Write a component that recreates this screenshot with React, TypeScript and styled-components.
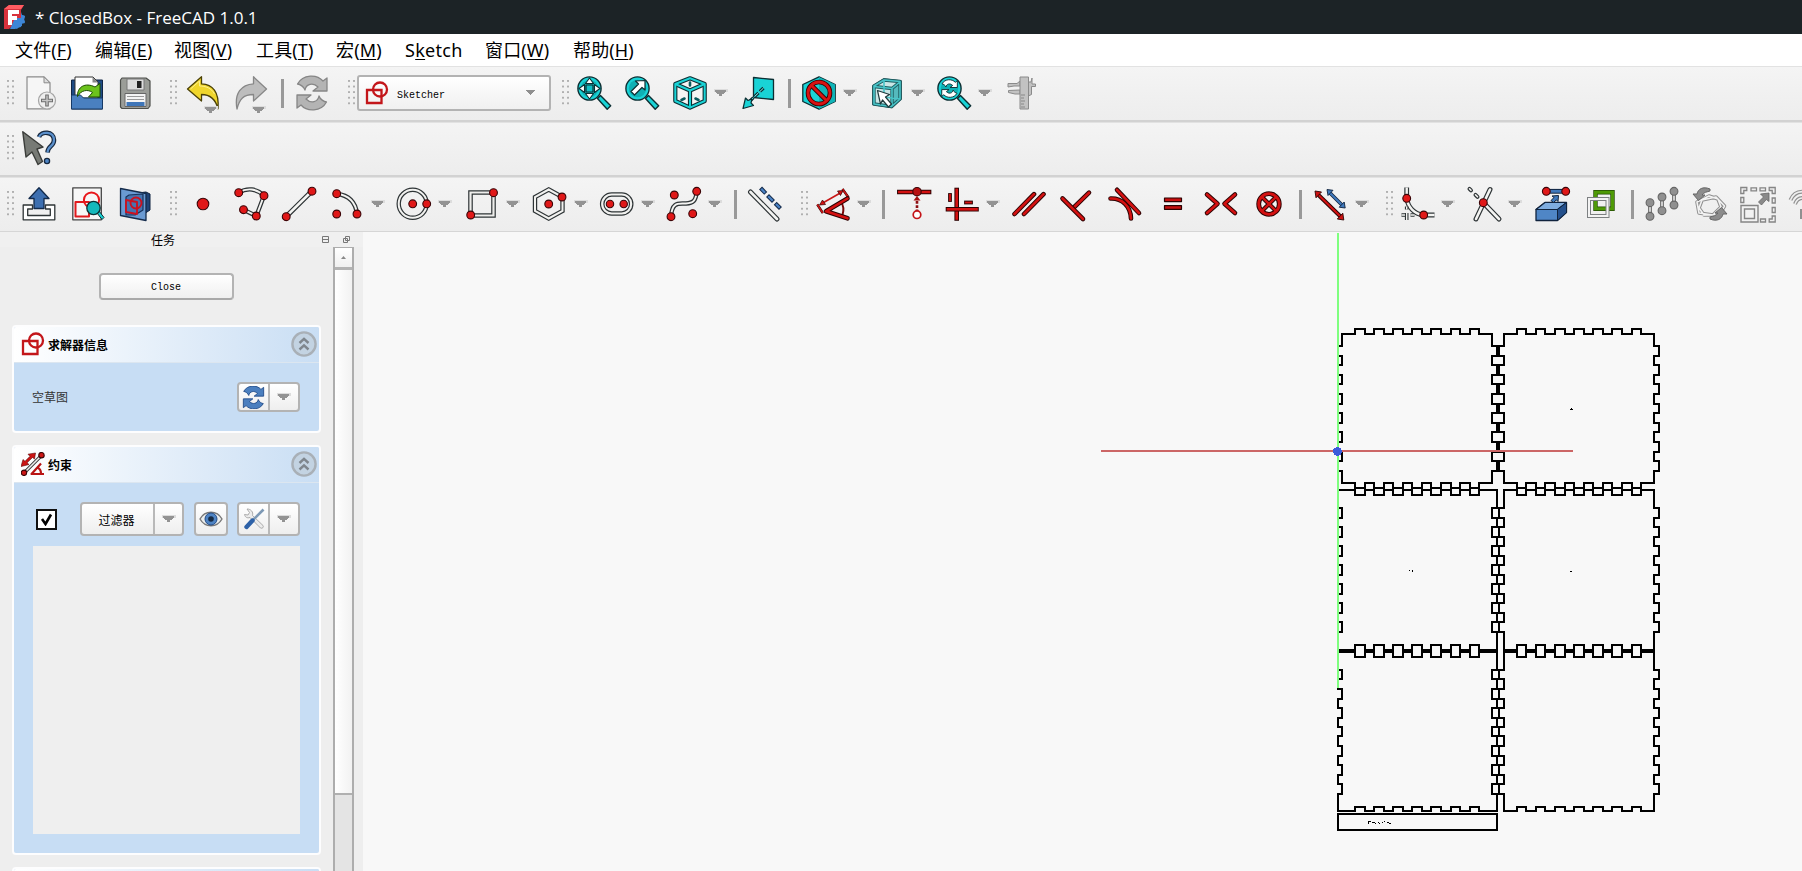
import React from 'react';
import styled, { createGlobalStyle } from 'styled-components';

const Global = createGlobalStyle`
  * { box-sizing: border-box; }
  html, body { margin: 0; padding: 0; overflow: hidden; background: #efefef; }
`;

const UI_FONT = '"Noto Sans", "Noto Sans CJK SC", sans-serif';
const SMALL_FONT = '"Noto Sans CJK SC", sans-serif';

const Window = styled.div`
  width: 1802px;
  height: 871px;
  display: flex;
  flex-direction: column;
  overflow: hidden;
  color: #000;
  font-family: ${UI_FONT};
`;

const TitleBar = styled.header`
  height: 34px;
  flex: none;
  display: flex;
  align-items: center;
  padding-left: 3px;
  gap: 10px;
  background: #1c2326;
  color: #fff;
`;

const TitleText = styled.span`
  font: 17px/34px "Open Sans", sans-serif;
  padding-top: 1px;
  white-space: pre;
`;

const MenuBar = styled.nav`
  height: 32px;
  flex: none;
  display: flex;
  padding-left: 15px;
  gap: 22px;
  background: #fff;
`;

const MenuItem = styled.span<{ $w: number; $ls?: number }>`
  width: ${(p) => p.$w}px;
  font: 18px/33px ${UI_FONT};
  letter-spacing: ${(p) => p.$ls ?? 0.15}px;
  white-space: nowrap;
  u { text-underline-offset: 2px; text-decoration-thickness: 1px; }
`;

const ToolBar = styled.div<{ $h: number; $pad: number; $last?: boolean }>`
  height: ${(p) => p.$h}px;
  flex: none;
  display: flex;
  align-items: center;
  overflow: hidden;
  background: linear-gradient(#f4f4f4, #ededed);
  border-top: 1px solid #e2e2e2;
  border-bottom: ${(p) => (p.$last ? '1px solid #d6d6d6' : '2px solid #d2d2d2')};
  padding-bottom: ${(p) => p.$pad}px;
`;

const Handle = styled.span<{ $ml: number }>`
  flex: none;
  width: 8px;
  height: 27px;
  margin-left: ${(p) => p.$ml}px;
  margin-right: -2px;
  background-image: radial-gradient(circle at 1px 1px, #b0b0b0 0.9px, transparent 1.2px);
  background-size: 5px 5.6px;
`;

const ToolButton = styled.span<{ $ml: number; $w?: number }>`
  position: relative;
  flex: none;
  display: flex;
  width: ${(p) => p.$w ?? 34}px;
  height: 34px;
  margin-left: ${(p) => p.$ml}px;
  svg { display: block; overflow: visible; }
`;

const Separator = styled.span<{ $ml: number }>`
  flex: none;
  width: 3px;
  height: 29px;
  margin-left: ${(p) => p.$ml}px;
  background: #999;
`;

const DropSlot = styled.span`
  flex: none;
  width: 14px;
  height: 8px;
  margin-left: 7px;
  display: flex;
`;

const CornerArrow = styled.span`
  position: absolute;
  left: 18px;
  top: 30px;
`;

const Combo = styled.div`
  flex: none;
  width: 194px;
  height: 36px;
  margin-left: 3px;
  padding: 0 13px 0 6px;
  display: flex;
  align-items: center;
  border: 2px solid #b3b3b3;
  border-radius: 3px;
  background: linear-gradient(#fff, #f0f0f0);
`;

const ComboText = styled.span`
  flex: 1;
  margin-left: 8px;
  padding-top: 5px;
  font: 10px/14px "Liberation Mono", monospace;
`;

const Main = styled.main`
  flex: 1;
  display: flex;
  min-height: 0;
`;

const Dock = styled.aside`
  width: 363px;
  flex: none;
  display: flex;
  flex-direction: column;
  background: #eee;
`;

const DockTitle = styled.div`
  height: 15px;
  flex: none;
  display: flex;
  align-items: center;
  justify-content: flex-end;
  padding: 0 13px 0 0;
  background: #f0f0f0;
`;

const DockName = styled.span`
  flex: 1;
  padding-left: 151px;
  font: 12px/15px ${SMALL_FONT};
`;

const DockIcons = styled.span`
  display: flex;
  gap: 14px;
`;

const DockBody = styled.div`
  flex: 1;
  min-height: 0;
  display: flex;
`;

const TaskList = styled.div`
  width: 333px;
  padding: 26px 12px 0;
  display: flex;
  flex-direction: column;
  overflow: hidden;
`;

const CloseButton = styled.button`
  flex: none;
  width: 135px;
  height: 27px;
  margin: 0 0 25px 87px;
  padding: 2px 1px 0 0;
  border: 2px solid #b3b3b3;
  border-bottom-color: #a9a9a9;
  border-radius: 4px;
  background: linear-gradient(#fff, #f0f0f0);
  font: 10px/20px "Liberation Mono", monospace;
  color: #000;
`;

const TaskBox = styled.section<{ $h: number }>`
  flex: none;
  height: ${(p) => p.$h}px;
  margin-bottom: 12px;
  border: 2px solid #fdfdfe;
  border-radius: 4px;
  background: #c7ddf4;
  overflow: hidden;
`;

const TaskHead = styled.div`
  height: 36px;
  display: flex;
  align-items: center;
  padding: 0 2px 2px 7px;
  gap: 3px;
  border-bottom: 1px solid #dce6f0;
  background: linear-gradient(90deg, #fff, #c9def4);
  font: 700 12px/34px ${SMALL_FONT};
  span { padding-top: 2px; }
  svg:last-child { margin-left: auto; }
`;

const TaskRow = styled.div<{ $mt: number }>`
  display: flex;
  align-items: center;
  height: 34px;
  margin-top: ${(p) => p.$mt}px;
  padding: 0 19px;
`;

const StatusText = styled.span`
  flex: 1;
  margin-left: -1px;
  font: 12px/16px ${SMALL_FONT};
  color: #333;
`;

const ButtonGroup = styled.div<{ $h: number; $ml?: number }>`
  display: flex;
  height: ${(p) => p.$h}px;
  margin-left: ${(p) => p.$ml ?? 0}px;
  border: 2px solid #b3b3b3;
  border-radius: 4px;
  background: linear-gradient(#fff, #eee);
`;

const Segment = styled.span<{ $w: number; $split?: boolean }>`
  width: ${(p) => p.$w}px;
  display: flex;
  align-items: center;
  justify-content: center;
  border-left: ${(p) => (p.$split ? '2px solid #b9b9b9' : 'none')};
  font: 12px/26px ${SMALL_FONT};
`;

const SegmentLabel = styled.span`
  padding: 2px 2px 0 0;
`;

const CheckBox = styled.span`
  width: 21px;
  height: 21px;
  margin-left: 3px;
  flex: none;
  display: flex;
  align-items: center;
  justify-content: center;
  border: 2px solid #111;
  background: #fff;
`;

const ConstraintList = styled.div`
  height: 288px;
  margin: 10px 19px 0;
  background: #efefef;
`;

const ScrollBar = styled.div`
  width: 21px;
  display: flex;
  flex-direction: column;
  border-left: 2px solid #adadad;
  border-right: 2px solid #adadad;
  border-top: 1px solid #adadad;
  background: #e4e4e4;
`;

const ScrollUp = styled.div`
  height: 22px;
  flex: none;
  display: flex;
  align-items: center;
  justify-content: center;
  border-bottom: 3px solid #b3b3b3;
  background: linear-gradient(#fff, #f0f0f0);
`;

const ScrollThumb = styled.div`
  height: 525px;
  flex: none;
  background: linear-gradient(90deg, #fff, #f2f2f2);
  border-bottom: 2px solid #b0b0b0;
`;

const Viewport = styled.div`
  flex: 1;
  display: flex;
  padding-top: 1px;
  background: #f8f8f8;
`;

/* ---------- icon primitives ---------- */

const OUT = '#0c2f33';
const TEAL = '#19d3d6';

const Icon = ({ children, w = 34, h = 34, vb }: { children: React.ReactNode; w?: number; h?: number; vb?: string }) => (
  <svg width={w} height={h} viewBox={vb ?? `0 0 ${w} ${h}`} fill="none" strokeLinejoin="round">{children}</svg>
);
const Dot = ({ x, y, r = 3.9, fill = '#e01818', stroke = '#3a0508' }: { x: number; y: number; r?: number; fill?: string; stroke?: string }) => (
  <circle cx={x} cy={y} r={r} fill={fill} stroke={stroke} strokeWidth={1.1} />
);
const Pipe = ({ d, inner = '#f4f4f2', outer = '#2e3436', w = 4.4, iw = 1.9, cap = 'round' }: { d: string; inner?: string; outer?: string; w?: number; iw?: number; cap?: 'round' | 'butt' | 'square' }) => (
  <g strokeLinecap={cap}>
    <path d={d} stroke={outer} strokeWidth={w} />
    <path d={d} stroke={inner} strokeWidth={iw} />
  </g>
);
const Red = ({ d, w = 4.6, cap = 'round' as 'round' | 'square' }: { d: string; w?: number; cap?: 'round' | 'square' }) => (
  <Pipe d={d} inner="#d41111" outer="#2c0303" w={w} iw={w - 2} cap={cap} />
);

const Triangle = () => (
  <svg width="14" height="8" viewBox="0 0 14 8" shapeRendering="crispEdges">
    <rect width="14" height="3" fill="#dcdcdc" />
    <path d="M1 1h11v2h-1v1h-1v1h-2v2h-3v-2h-2v-1h-1v-1h-1z" fill="#939393" />
  </svg>
);
const SmallTriangle = () => (
  <svg width="10" height="6" viewBox="0 0 10 6" shapeRendering="crispEdges">
    <path d="M0 0h9v1h-1v1h-1v1h-1v1h-1v1h-1v-1h-1v-1h-1v-1h-1v-1h-1z" fill="#8f8f8f" />
  </svg>
);
const Drop = () => <DropSlot><Triangle /></DropSlot>;

const Lens = () => (
  <>
    <path d="M20.500 22.500l3-3 10.200 10.200-3.500 3.500z" fill={TEAL} stroke={OUT} strokeWidth="1.4" />
    <circle cx="12.500" cy="12.500" r="11.600" fill={TEAL} stroke={OUT} strokeWidth="1.400" />
    <circle cx="12.500" cy="12.500" r="8.700" fill="#0fb0b4" />
  </>
);

const Logo = () => (
  <Icon w={22} h={26}>
    <path d="M10 9l3-2 2 2 3-1 1 3 3 1-1 3 1 3-3 1v3l-3 1-2 2-4-2z" fill="#3d86d6" />
    <path d="M1 5L6 1h15l-3 5v8L6 25H1z" fill="#d8323c" />
    <path d="M1 5L6 1h15l-3 4H6z" fill="#ff5c62" />
    <path d="M12 14h6l1-3 3 1-1 4 1 3-4 1v3l-4 1-2 1H7z" fill="#3d86d6" />
    <path d="M5 6h11v4H9v2h5v4H9v5H5z" fill="#fff" />
  </Icon>
);
const NewDoc = () => (
  <Icon>
    <path d="M5 .8h17l6 6v26H5z" fill="#f6f6f6" stroke="#8b8b8b" strokeWidth="1.200" />
    <path d="M22 .8v6h6z" fill="#ddd" stroke="#8b8b8b" />
    <circle cx="25" cy="24.500" r="8.500" fill="#eee" stroke="#a5a5a5" strokeWidth="1.200" />
    <path d="M25 18.500v12M19 24.500h12" stroke="#6f6f6f" strokeWidth="3.600" />
    <path d="M25 19.500v10M20 24.500h10" stroke="#c8c8c8" strokeWidth="1.400" />
  </Icon>
);
const OpenDoc = () => (
  <Icon>
    <path d="M1.500 4h31v29h-31z" fill="#1e4b85" stroke="#102544" />
    <path d="M5 1h18l5 5v16H5z" fill="#fff" stroke="#333" />
    <path d="M22.500 1v5.500H28z" fill="#888" />
    <path d="M1.500 19h9l3 3h19v11h-31z" fill="#4a80c0" stroke="#173a66" />
    <path d="M7.500 20.500C7 11 15 6 25 11l5-3.500V21H18.500l4-4.500C18 13 11 14 7.500 20.500z" fill="#6cc31c" stroke="#1d4c04" />
  </Icon>
);
const Save = () => (
  <Icon>
    <path d="M4 2h24l4 3v25l-2 2.500H4L2.500 31V4z" fill="#9b9d98" stroke="#4d4f4b" strokeWidth="1.200" />
    <rect x="9" y="3" width="17" height="11" fill="#ddd" stroke="#777" />
    <rect x="19" y="5" width="4.500" height="7" fill="#222" />
    <path d="M7 17.500h21v13H7z" fill="#f4f4f4" stroke="#666" />
    <path d="M9 20.500h17M9 23.500h17" stroke="#999" />
    <path d="M8.500 26h18v4h-18z" fill="#3f76b8" />
  </Icon>
);
const Undo = () => (
  <Icon>
    <path d="M1.500 13L15.500 .8v7c11 .5 18 8 16.500 25C29.500 23 24.500 18.500 15.500 18.500V25z" fill="#f0d62c" stroke="#4b4106" strokeWidth="1.300" />
    <path d="M4.500 13l9-8v5c6 0 12 2 15 8" stroke="#fdf08a" />
  </Icon>
);
const Redo = () => (
  <Icon>
    <path d="M32.500 13L19.500 .8v7C7.500 8.500 0 17 3 33 5.500 23 9.500 18.500 19.500 18.500V25z" fill="#bdbdbd" stroke="#878787" strokeWidth="1.300" />
  </Icon>
);
const SYNC_PATH = 'M2.500 8C8-2 22-2 28 5l4-3v13H18l5-4C18 6 11 8 10 14 9 11 5 8 2.500 8zM31.500 26C26 36 12 36 6 29l-4 3V19h14l-5 4c5 5 12 3 13-3 1 3 5 6 7.500 6z';
const Sync = ({ fill, stroke, size = 34 }: { fill: string; stroke: string; size?: number }) => (
  <Icon w={size} h={size} vb="0 0 34 34">
    <path d={SYNC_PATH} fill={fill} stroke={stroke} strokeWidth="1.300" />
  </Icon>
);
const SketchMark = ({ size = 24 }: { size?: number }) => (
  <Icon w={size} h={size} vb="0 0 24 24">
    <g stroke="#c3161a" strokeWidth="2.300" strokeLinejoin="miter">
      <path d="M2 9h14.500v13H2z" />
      <circle cx="15" cy="8.500" r="7" />
    </g>
  </Icon>
);
const HelpCursor = () => (
  <Icon>
    <path d="M.8.800L21 16l-6 2 5.500 12.500-4.500 3L10 21l-6 5z" fill="#777a75" stroke="#3a3c39" strokeWidth="1.400" />
    <Pipe d="M17 6c2-6 15-6 15 3 0 7-6 5-6.500 12.500" inner="#5b90cc" outer="#16273e" w={4.600} iw={2.200} cap="butt" />
    <circle cx="25" cy="30" r="2.600" fill="#4d84c4" stroke="#16273e" strokeWidth="1.300" />
  </Icon>
);
const FitAll = () => (
  <Icon>
    <Lens />
    <path d="M12.500 2l4 5.500h-8zM12.500 23l4-5.500h-8zM2 12.500l5.500-4v8zM23 12.500l-5.500-4v8z" fill="#fff" stroke={OUT} strokeWidth="1.100" />
    <path d="M9 9h7v7H9z" fill="#12c0c4" stroke={OUT} strokeWidth="1.200" />
  </Icon>
);
const FitSelection = () => (
  <Icon>
    <Lens />
    <path d="M20 4.500v9.500l-3-2.500-7.500 7.500-3.500-3.500L13.500 8l-3-3z" fill="#fff" stroke={OUT} strokeWidth="1.200" />
  </Icon>
);
const IsoView = () => (
  <Icon>
    <g stroke={OUT} strokeWidth="4.200" fill="#f4f4f4">
      <path d="M17 2.300L31.700 8v17L17 31.700 2.300 25V8z" />
      <path d="M2.300 8L17 14.500 31.700 8M17 14.500V32" />
    </g>
    <g stroke={TEAL} strokeWidth="2">
      <path d="M17 2.300L31.700 8v17L17 31.700 2.300 25V8z" />
      <path d="M2.300 8L17 14.500 31.700 8M17 14.500V32" />
    </g>
    <path d="M17 6.500v3M8.500 24l3-1.500M22.500 22.500l3 1.500" stroke="#0a5a5e" strokeWidth="2.600" strokeLinecap="round" />
  </Icon>
);
const AlignView = () => (
  <Icon>
    <path d="M12.500 1.500L32.500 3.500v20l-20-2z" fill={TEAL} stroke={OUT} strokeWidth="1.300" />
    <path d="M22.500 12L9 25" stroke={OUT} strokeWidth="3.200" strokeDasharray="5 2" />
    <path d="M22.500 12L9 25" stroke="#8ff" strokeWidth="1" strokeDasharray="5 2" />
    <path d="M2 32.500l2.500-10.500 2.500 2.500 4-1.500-1 4 2.500 2.500z" fill={TEAL} stroke={OUT} strokeWidth="1.200" />
  </Icon>
);
const DrawStyle = () => (
  <Icon>
    <path d="M17 .8L33.200 8.500v17L17 33.200.8 25.500v-17z" fill={TEAL} stroke={OUT} strokeWidth="1.300" />
    <path d="M17 1v32l16-7.500v-17z" fill="#10b4b8" />
    <circle cx="17" cy="17" r="11" stroke="#3a0000" strokeWidth="4.600" />
    <path d="M9 9l16 16" stroke="#3a0000" strokeWidth="4.600" />
    <circle cx="17" cy="17" r="11" stroke="#d81313" strokeWidth="2.800" />
    <path d="M9 9l16 16" stroke="#d81313" strokeWidth="2.800" />
  </Icon>
);
const SelectCube = () => (
  <Icon>
    <path d="M3 10l11-7 17 2v18l-9 8.500-19-3z" fill="#c9e6e6" stroke={OUT} strokeWidth="1.600" />
    <path d="M22 13l9-8v18l-9 8.500z" fill="#55b9bd" />
    <g stroke="#1f5f63" strokeWidth="3.400"><path d="M4 10.500l18 2 8.500-7M22 13v17M4 10l10-6 16 1.500V23l-8.500 7.500L4 28z" /></g>
    <g stroke="#49c5c9" strokeWidth="1.600"><path d="M4 10.500l18 2 8.500-7M22 13v17M4 10l10-6 16 1.500V23l-8.500 7.500L4 28zM14 4v17M14 21l16 2" /></g>
    <path d="M7.500 14.500l12 4-4 2.500 6 7-3 3-6-7-2 4z" fill="#fff" stroke="#203a3c" strokeWidth="1.200" />
  </Icon>
);
const LensSync = () => (
  <Icon>
    <Lens />
    <path d={SYNC_PATH} transform="translate(3.700 3.700) scale(.52)" fill="#fff" stroke={OUT} strokeWidth="1.800" />
  </Icon>
);
const Caliper = () => (
  <Icon>
    <g fill="#c2c2c2" stroke="#8a8a8a">
      <path d="M14 5v5H8l-6 1V7.500h9z" />
      <path d="M14 14v4H9L2.500 16.500v-2z" />
      <path d="M20 6h5l1-4v6h3.500v2.500h-4v8L20 21z" />
      <path d="M14 1h8.500v32H14z" />
    </g>
    <path d="M15 19h4M15 22h3M15 25h4M15 28h3M15 31h4" stroke="#888" />
  </Icon>
);

const LeaveSketch = () => (
  <Icon>
    <path d="M10.500 18H1.200v14.800h31.600V18H23.500v4h4.800v6.500H5.700V22h4.800z" fill="#fff" stroke="#2e3436" strokeWidth="1.300" />
    <path d="M17 .8l10 10.700h-5v10H12v-10H7z" fill="#3d6fb0" stroke="#122a4b" strokeWidth="1.300" />
  </Icon>
);
const ViewSketch = () => (
  <Icon>
    <path d="M2.800.8h28.500v32H2.800z" fill="#f7f7f7" stroke="#444" strokeWidth="1.300" />
    <path d="M5.500 15h13.500v14.500H5.500z" stroke="#e01a1e" strokeWidth="2" />
    <circle cx="21.500" cy="13" r="7.600" stroke="#e8181c" strokeWidth="2" />
    <path d="M27 26l2-2 5 6.500-2 2z" fill={TEAL} stroke={OUT} />
    <circle cx="23.500" cy="21" r="6.700" fill="#14b9bc" stroke={OUT} strokeWidth="1.300" />
  </Icon>
);
const SectionView = () => (
  <Icon>
    <path d="M12 7l16-2 4 2v16l-6 4z" fill="#1f4376" stroke="#0f2340" />
    <path d="M2.500 1.500L28 6.500v27L2.500 28.500z" fill="#6a9ad2" stroke="#152c4c" strokeWidth="1.300" />
    <path d="M11 8l14-1v16l-8 5H8V10z" fill="#4674b0" stroke="#17335c" strokeWidth="1.200" />
    <path d="M8 13l11 2v12l-11-2z" stroke="#cc1220" strokeWidth="1.900" />
    <circle cx="18" cy="16" r="5.500" stroke="#cc1220" strokeWidth="1.900" />
  </Icon>
);
const PointTool = () => <Icon><Dot x={17} y={17} r={5.800} /></Icon>;
const Polyline = () => (
  <Icon>
    <Pipe d="M4.700 5.700C13 .5 23 1.500 30 8.700L22.300 29 9.500 22.700" />
    <Dot x={4.700} y={5.700} /><Dot x={30} y={8.700} /><Dot x={22.300} y={29} /><Dot x={9.500} y={22.700} />
  </Icon>
);
const LineTool = () => <Icon><Pipe d="M30 4L4 29.700" w={5} iw={2.600} /><Dot x={30} y={4.200} /><Dot x={4.200} y={29.700} /></Icon>;
const ArcTool = () => <Icon><Pipe d="M6.700 6.700Q25 9 27 27" /><Dot x={6.700} y={6.700} /><Dot x={27} y={27} /><Dot x={6.700} y={27} /></Icon>;
const CircleTool = () => (
  <Icon>
    <circle cx="15.700" cy="16.800" r="14" stroke="#2e3436" strokeWidth="4.400" />
    <circle cx="15.700" cy="16.800" r="14" stroke="#f2f2f0" strokeWidth="2" />
    <Dot x={15.700} y={16.800} /><Dot x={29.700} y={16.800} />
  </Icon>
);
const RectTool = () => (
  <Icon>
    <g strokeLinejoin="miter">
      <path d="M5.500 5.500h23v23h-23z" stroke="#2e3436" strokeWidth="4.600" />
      <path d="M5.500 5.500h23v23h-23z" stroke="#eeeeec" strokeWidth="2.200" />
    </g>
    <Dot x={28.500} y={5.700} /><Dot x={5.700} y={28} />
  </Icon>
);
const HexTool = () => (
  <Icon>
    <path d="M15.700 2.500L29.500 10v14L15.700 31.500 2 24V10z" stroke="#2e3436" strokeWidth="4.400" strokeLinejoin="miter" />
    <path d="M15.700 2.500L29.500 10v14L15.700 31.500 2 24V10z" stroke="#f2f2f0" strokeWidth="2" strokeLinejoin="miter" />
    <Dot x={15.700} y={17} /><Dot x={29} y={10} />
  </Icon>
);
const SlotTool = () => (
  <Icon>
    <rect x="2.200" y="7.500" width="29" height="19" rx="9.500" stroke="#2e3436" strokeWidth="4.600" />
    <rect x="2.200" y="7.500" width="29" height="19" rx="9.500" stroke="#f2f2f0" strokeWidth="2.200" />
    <Dot x={10} y={17} r={3.700} /><Dot x={23.700} y={17} r={3.700} />
  </Icon>
);
const SplineTool = () => (
  <Icon>
    <Pipe d="M4 29.700C5 14 12 17 19 16.500S29 14 29.700 4.300" />
    <Dot x={7.300} y={8} /><Dot x={29.700} y={4.300} /><Dot x={4} y={29.700} /><Dot x={25.700} y={26.700} />
  </Icon>
);
const Construction = () => (
  <Icon>
    <Pipe d="M2.500 5L29 32" w={5} iw={2.600} />
    <Pipe d="M14 2.500l2.300 2.400M21 10l3 3M28.700 17.700l2.300 2.300" inner="#4a82c4" outer="#142a4a" w={4.200} iw={2.200} cap="square" />
  </Icon>
);
const Dimension = () => (
  <Icon>
    <path d="M1.300 17.500l5.500 8.500M26.500 2l6 8.500" stroke="#2c0303" strokeWidth="2.400" />
    <path d="M1.300 17.500l5.500 8.500M26.500 2l6 8.500M5 17L26 5" stroke="#c81616" strokeWidth="1.600" />
    <path d="M3.500 18l3-5 3 4.500zM27 3.500l-5.500.5 3 4.500z" fill="#d41111" stroke="#2c0303" strokeWidth=".7" />
    <path d="M25 15c3 4 3 8 1.500 13" stroke="#7a0808" strokeWidth="2" />
    <Red d="M31.500 11.500L10 24.300l21.500 7" />
  </Icon>
);
const PointOn = () => (
  <Icon>
    <Red d="M2.200 5h30" w={4.300} cap="square" /><Dot x={20} y={4.700} r={4.200} fill="#b81010" />
    <path d="M20 9l3.500 4.500h-7z" fill="#a30d0d" />
    <path d="M20 14v10" stroke="#8d0e12" strokeWidth="2.600" strokeDasharray="2.800 1.500" />
    <circle cx="20" cy="27.700" r="3.800" fill="#fff" stroke="#c41418" strokeWidth="1.700" />
  </Icon>
);
const HorVert = () => (
  <Icon>
    <Red d="M11.700 3v28.500" cap="square" /><Red d="M3 22.300h28.500" cap="square" />
    <Red d="M5 8v5" w={3.800} cap="square" /><Red d="M21 15.500h5" w={3.800} cap="square" />
  </Icon>
);
const Parallel = () => <Icon><Red d="M2.500 27L22 7.200M12 27L31.500 7.200" /></Icon>;
const Perp = () => <Icon><Red d="M13.300 21L29 5.700" /><Red d="M2.500 11.500l20.500 20.500" /></Icon>;
const Tangent = () => <Icon><Red d="M2.500 11.500C14 11 22.500 19 23 31.500" /><Red d="M9 2.800l22 23.200" /></Icon>;
const Equal = () => <Icon><path d="M8.500 11h17v3.600h-17zM8.500 18.700h17v3.600h-17z" fill="#c81010" stroke="#2c0303" strokeWidth="1.200" /></Icon>;
const Symmetric = () => <Icon><Red d="M3 7.500l10.500 9.300L3 26" /><Red d="M31 7.500l-10.500 9.300L31 26" /></Icon>;
const Block = () => (
  <Icon>
    <circle cx="17" cy="17" r="10.300" stroke="#2c0303" strokeWidth="4.800" />
    <path d="M10 10l14 14M24 10L10 24" stroke="#2c0303" strokeWidth="4.400" />
    <circle cx="17" cy="17" r="10.300" stroke="#d41111" strokeWidth="2.800" />
    <path d="M10 10l14 14M24 10L10 24" stroke="#d41111" strokeWidth="2.400" />
  </Icon>
);
const Driving = () => (
  <Icon>
    <Red d="M5 8.500l21 20.500" w={4} />
    <path d="M1 4l6.500 1L2 10.800zM29.800 33l-6.500-1 5.500-5.800z" fill="#cc1111" stroke="#2c0303" strokeWidth=".9" />
    <Pipe d="M16.500 6.500l11 11" inner="#3f79bd" outer="#10233d" w={3.600} iw={2} />
    <path d="M13 2.500l6 .8-5 5.200zM31.200 21l-6-.8 5-5.200z" fill="#3f79bd" stroke="#10233d" strokeWidth=".9" />
  </Icon>
);
const Fillet = () => (
  <Icon>
    <Pipe d="M6.700 .5v11C8 20 14 27 23.700 28H34.500" w={4.800} iw={2.400} cap="butt" />
    <Pipe d="M6.700 19.500v3M1.500 28h3.500M6.700 26v7M10.500 28h4" w={3.600} iw={1.400} cap="butt" />
    <Dot x={6.700} y={11.300} /><Dot x={23.700} y={28} />
  </Icon>
);
const Trim = () => (
  <Icon>
    <Pipe d="M2.500 1.800l1.500 1.500M8.500 7.800l2 2" w={4} iw={1.600} />
    <Pipe d="M23 2.500L9 32M16.300 15.700L32 32" w={5} iw={2.600} />
    <Dot x={16.300} y={15.700} />
  </Icon>
);
const External = () => (
  <Icon>
    <path d="M1 22.500l9-7h21.500v10l-9 8H1z" fill="#4f86c6" stroke="#10233d" strokeWidth="1.300" />
    <path d="M1 22.500l9-7h21.500l-9 7z" fill="#7fade0" stroke="#10233d" strokeWidth="1.200" />
    <path d="M22.500 22.500l9-7v10l-9 8z" fill="#24508c" stroke="#10233d" />
    <path d="M11.300 4.300h19.400" stroke="#10233d" strokeWidth="4.800" /><path d="M11.300 4.300h19.400" stroke="#3f79bd" strokeWidth="2.800" />
    <path d="M16 13.500l3-3-2-1.500 6.500-.5-.5 6-1.600-1.600-2.900 2.600z" fill="#3f79bd" stroke="#10233d" />
    <Dot x={11.300} y={4.300} /><Dot x={30.700} y={4.300} />
  </Icon>
);
const CarbonCopy = () => (
  <Icon>
    <g strokeLinejoin="miter">
      <path d="M12.500 5.300h17v16.500h-17z" stroke="#234a05" strokeWidth="4.400" />
      <path d="M12.500 5.300h17v16.500h-17z" stroke="#4e9a06" strokeWidth="3" />
      <path d="M6 12h18.500v17H6z" stroke="#7d8082" strokeWidth="4" />
      <path d="M6 12h18.500v17H6z" stroke="#f3f3f3" strokeWidth="2" />
    </g>
  </Icon>
);
const GREY = { fill: '#909090', stroke: '#666' };
const Elements = () => (
  <Icon>
    <path d="M5 16v13M17 10v13M29 4.500v13" stroke="#777" strokeWidth="4" />
    <path d="M5 16v13M17 10v13M29 4.500v13" stroke="#d8d8d8" strokeWidth="1.800" />
    <Dot x={5} y={15.700} {...GREY} /><Dot x={5} y={29.300} {...GREY} /><Dot x={17} y={10} {...GREY} />
    <Dot x={17} y={23.700} {...GREY} /><Dot x={29} y={4.300} {...GREY} /><Dot x={29} y={18} {...GREY} />
  </Icon>
);
const Rotate = () => (
  <Icon>
    <path d="M4 15l12-6 9 3 3 8-8 8-14-2zM9 13l14-3 8.500 9-5.500 9H11L6 21z" stroke="#909090" strokeWidth="3.600" />
    <path d="M4 15l12-6 9 3 3 8-8 8-14-2zM9 13l14-3 8.500 9-5.500 9H11L6 21z" stroke="#f2f2f2" strokeWidth="1.600" />
    <path d="M17 2C10-1 5 2 4 7H0l5.500 6.500L12 8H9c2-3 5-3 8-4zM17 32c7 3 12 0 13-5h4l-5.500-6.500L22 26h3c-2 3-5 3-8 4z" fill="#8c8c8c" stroke="#666" />
  </Icon>
);
const Scale = () => (
  <Icon w={36} h={36}>
    <g strokeLinejoin="miter">
      <path d="M.8.500h6v3h-3v3h-3zM35.200.500h-6v3h3v3h3zM35.200 35h-6v-3h3v-3h3zM11 .8v3h5.500v-3zM20 .8v3h5.500v-3zM32.200 11v5h3v-5zM32.200 20.500v5h3v-5zM20.500 32v3h5v-3zM.8 10.500v5h3v-5z" stroke="#858585" strokeWidth="1.300" fill="#eee" />
      <path d="M1 18.500h17V35H1z" fill="#f2f2f2" stroke="#858585" strokeWidth="1.400" />
      <path d="M4.500 22h10v9.500h-10z" stroke="#858585" strokeWidth="1.400" />
    </g>
    <path d="M18.500 15l5-5-3-3L29 6v8.500l-2.700-2L21.500 18z" fill="#8a8a8a" stroke="#666" strokeWidth=".8" />
  </Icon>
);
const Offset = () => (
  <Icon>
    <path d="M1.500 13C6 2 20 2 26 12M6 17c3-8 12-8 16 0M13 22v10" stroke="#909090" strokeWidth="4" />
    <path d="M1.500 13C6 2 20 2 26 12M6 17c3-8 12-8 16 0" stroke="#f0f0f0" strokeWidth="1.600" />
  </Icon>
);

const ConstraintMark = () => (
  <Icon w={24} h={24}>
    <path d="M2.500 21.500L21 3" stroke="#333" strokeWidth="3.200" /><path d="M2.500 21.500L21 3" stroke="#eee" strokeWidth="1.600" />
    <path d="M0 14.500l2-7 2 1.800 5-5L7 2.200 14.500 1l-1 6-2-1.500-5.500 5.300 2 1.700z" fill="#cc1515" stroke="#5a0808" strokeWidth=".6" />
    <path d="M20 11.500L10.500 22H23M16 15.500c3 1 4 3 4 6" stroke="#b81414" strokeWidth="2.200" />
    <Dot x={20.500} y={3.200} r={2.700} fill="#cc1515" /><Dot x={3} y={20.800} r={2.700} fill="#cc1515" />
  </Icon>
);
const Collapse = () => (
  <Icon w={26} h={26}>
    <circle cx="13" cy="13" r="11.600" fill="#c3d3e2" stroke="#a9b0b7" strokeWidth="2.400" />
    <path d="M8.500 12l4.500-4.200L17.500 12M8.500 18.500l4.500-4.200 4.500 4.200" stroke="#7f868d" strokeWidth="2.400" strokeLinejoin="miter" />
  </Icon>
);
const Eye = () => (
  <Icon w={24} h={18}>
    <path d="M1 9C6 0 18 0 23 9 18 18 6 18 1 9z" fill="#eceeed" stroke="#777" strokeWidth="1.400" />
    <circle cx="12" cy="9" r="6" fill="#4f84c4" stroke="#204a87" /><circle cx="12" cy="9" r="2.800" fill="#162b45" />
  </Icon>
);
const Wrench = () => (
  <Icon w={22} h={22}>
    <path d="M4 1l2.500 3.500L5 7 1.500 6.500C2 9 4 10.500 7 9.500l10.500 10.500c2 1 3.500-1 2.500-2.500L9.500 7.500C10.500 4 8 1 4 1z" fill="#ececec" stroke="#a4a4a4" strokeWidth=".9" />
    <path d="M20.500 1.500L10 12" stroke="#7d99b5" strokeWidth="2.600" />
    <path d="M9.500 12.500l-6 6.500" stroke="#2e62a8" strokeWidth="4.400" strokeLinecap="round" />
  </Icon>
);

/* ---------- sketch geometry ---------- */

type Span = [number, number];
const COL_L: Span[] = [[1355, 1365], [1374, 1384], [1393, 1403], [1412, 1422], [1431, 1441], [1451, 1460], [1470, 1479]];
const COL_R: Span[] = [[1517, 1526], [1536, 1545], [1555, 1565], [1574, 1584], [1593, 1603], [1612, 1622], [1632, 1641]];
const ROW_1: Span[] = [[346, 356], [365, 375], [384, 394], [404, 413], [423, 432], [442, 452], [461, 471]];
const ROW_2: Span[] = [[508, 518], [527, 537], [546, 556], [565, 575], [584, 594], [603, 613], [622, 632]];
const ROW_3: Span[] = [[670, 679], [689, 699], [708, 718], [727, 736], [746, 756], [765, 775], [784, 794]];

interface Panel {
  x: Span; y: Span; cols: Span[]; rows: Span[];
  top: number; bottom: number; left: number; right: number;
}

/* Finger-joint outline: each side sits on its base line and steps to the tooth line over every span. */
const outline = ({ x, y, cols, rows, top, bottom, left, right }: Panel) => {
  const back = (s: Span[]) => [...s].reverse();
  return [
    `M${x[0]} ${y[0]}`,
    ...cols.map(([a, b]) => `H${a}V${top}H${b}V${y[0]}`),
    `H${x[1]}`,
    ...rows.map(([a, b]) => `V${a}H${right}V${b}H${x[1]}`),
    `V${y[1]}`,
    ...back(cols).map(([a, b]) => `H${b}V${bottom}H${a}V${y[1]}`),
    `H${x[0]}`,
    ...back(rows).map(([a, b]) => `V${b}H${left}V${a}H${x[0]}`),
    'Z',
  ].join('');
};

const PANELS: Panel[] = [
  { x: [1342, 1492], y: [334, 483], cols: COL_L, rows: ROW_1, top: 329, bottom: 488, left: 1338, right: 1497 },
  { x: [1504, 1654], y: [334, 483], cols: COL_R, rows: ROW_1, top: 329, bottom: 488, left: 1499, right: 1659 },
  { x: [1338, 1497], y: [490, 650], cols: COL_L, rows: ROW_2, top: 495, bottom: 645, left: 1342, right: 1492 },
  { x: [1504, 1654], y: [490, 650], cols: COL_R, rows: ROW_2, top: 495, bottom: 645, left: 1499, right: 1659 },
  { x: [1338, 1497], y: [652, 811], cols: COL_L, rows: ROW_3, top: 657, bottom: 807, left: 1342, right: 1492 },
  { x: [1504, 1654], y: [652, 811], cols: COL_R, rows: ROW_3, top: 657, bottom: 807, left: 1499, right: 1659 },
];

const Sketch = () => (
  <svg width="1439" height="638" viewBox="363 233 1439 638" fill="none" shapeRendering="crispEdges">
    <g stroke="#000" strokeWidth="2">
      {PANELS.map((p, i) => <path key={i} d={outline(p)} />)}
      <path d="M1338 814H1497V830H1338Z" />
    </g>
    <path d="M1570 409h3v1h-3zM1571 408h1v1h-1zM1409 570h1v1h-1zM1412 570h1v2h-1zM1570 571h2v1h-2z" fill="#000" />
    <path d="M1368 821h3v1h-3zM1368 822h1v2h-1zM1372 822h3v1h-3zM1375 823h1v1h-1zM1378 822h1v1h-1zM1379 823h1v1h-1zM1382 822h1v1h-1zM1384 821h1v1h-1zM1387 822h2v1h-2zM1389 823h2v1h-2z" fill="#000" />
    <path d="M1338 233V688" stroke="#7fff7f" strokeWidth="2" />
    <path d="M1101 451H1573" stroke="#cc6666" strokeWidth="2" />
    <circle cx="1337.500" cy="451.500" r="4.500" fill="#3b5bdb" />
  </svg>
);

const MENUS: { label: string; key: string; tail: string; w: number; ls?: number }[] = [
  { label: '文件(', key: 'F', tail: ')', w: 58 },
  { label: '编辑(', key: 'E', tail: ')', w: 57 },
  { label: '视图(', key: 'V', tail: ')', w: 60 },
  { label: '工具(', key: 'T', tail: ')', w: 58 },
  { label: '宏(', key: 'M', tail: ')', w: 47 },
  { label: 'S', key: 'k', tail: 'etch', w: 58, ls: 0.3 },
  { label: '窗口(', key: 'W', tail: ')', w: 66 },
  { label: '帮助(', key: 'H', tail: ')', w: 62 },
];

export default function App() {
  return (
    <Window>
      <Global />
      <TitleBar><Logo /><TitleText>* ClosedBox - FreeCAD 1.0.1</TitleText></TitleBar>
      <MenuBar>
        {MENUS.map((m) => (
          <MenuItem key={m.key} $w={m.w} $ls={m.ls}>{m.label}<u>{m.key}</u>{m.tail}</MenuItem>
        ))}
      </MenuBar>
      <ToolBar $h={56} $pad={1}>
        <Handle $ml={7} />
        <ToolButton $ml={9}><NewDoc /></ToolButton>
        <ToolButton $ml={14}><OpenDoc /></ToolButton>
        <ToolButton $ml={14}><Save /></ToolButton>
        <Handle $ml={18} />
        <ToolButton $ml={10}><Undo /><CornerArrow><Triangle /></CornerArrow></ToolButton>
        <ToolButton $ml={14}><Redo /><CornerArrow><Triangle /></CornerArrow></ToolButton>
        <Separator $ml={13} />
        <ToolButton $ml={11}><Sync fill="#b4b4b4" stroke="#868686" /></ToolButton>
        <Handle $ml={19} />
        <Combo><SketchMark /><ComboText>Sketcher</ComboText><SmallTriangle /></Combo>
        <Handle $ml={11} />
        <ToolButton $ml={9}><FitAll /></ToolButton>
        <ToolButton $ml={14}><FitSelection /></ToolButton>
        <ToolButton $ml={14}><IsoView /></ToolButton><Drop />
        <ToolButton $ml={13}><AlignView /></ToolButton>
        <Separator $ml={13} />
        <ToolButton $ml={11}><DrawStyle /></ToolButton><Drop />
        <ToolButton $ml={13}><SelectCube /></ToolButton><Drop />
        <ToolButton $ml={12}><LensSync /></ToolButton><Drop />
        <ToolButton $ml={14}><Caliper /></ToolButton>
      </ToolBar>
      <ToolBar $h={55} $pad={2}>
        <Handle $ml={7} />
        <ToolButton $ml={9}><HelpCursor /></ToolButton>
      </ToolBar>
      <ToolBar $h={55} $pad={1} $last>
        <Handle $ml={7} />
        <ToolButton $ml={9}><LeaveSketch /></ToolButton>
        <ToolButton $ml={14}><ViewSketch /></ToolButton>
        <ToolButton $ml={14}><SectionView /></ToolButton>
        <Handle $ml={18} />
        <ToolButton $ml={10}><PointTool /></ToolButton>
        <ToolButton $ml={14}><Polyline /></ToolButton>
        <ToolButton $ml={14}><LineTool /></ToolButton>
        <ToolButton $ml={14}><ArcTool /></ToolButton><Drop />
        <ToolButton $ml={12}><CircleTool /></ToolButton><Drop />
        <ToolButton $ml={13}><RectTool /></ToolButton><Drop />
        <ToolButton $ml={13}><HexTool /></ToolButton><Drop />
        <ToolButton $ml={12}><SlotTool /></ToolButton><Drop />
        <ToolButton $ml={12}><SplineTool /></ToolButton><Drop />
        <Separator $ml={12} />
        <ToolButton $ml={11}><Construction /></ToolButton>
        <Handle $ml={19} />
        <ToolButton $ml={9}><Dimension /></ToolButton><Drop />
        <Separator $ml={11} />
        <ToolButton $ml={12}><PointOn /></ToolButton>
        <ToolButton $ml={14}><HorVert /></ToolButton><Drop />
        <ToolButton $ml={12}><Parallel /></ToolButton>
        <ToolButton $ml={14}><Perp /></ToolButton>
        <ToolButton $ml={14}><Tangent /></ToolButton>
        <ToolButton $ml={14}><Equal /></ToolButton>
        <ToolButton $ml={14}><Symmetric /></ToolButton>
        <ToolButton $ml={14}><Block /></ToolButton>
        <Separator $ml={13} />
        <ToolButton $ml={12}><Driving /></ToolButton><Drop />
        <Handle $ml={17} />
        <ToolButton $ml={8}><Fillet /></ToolButton><Drop />
        <ToolButton $ml={12}><Trim /></ToolButton><Drop />
        <ToolButton $ml={13}><External /></ToolButton>
        <ToolButton $ml={14}><CarbonCopy /></ToolButton>
        <Separator $ml={14} />
        <ToolButton $ml={11}><Elements /></ToolButton>
        <ToolButton $ml={14}><Rotate /></ToolButton>
        <ToolButton $ml={13} $w={36}><Scale /></ToolButton>
        <ToolButton $ml={13}><Offset /></ToolButton>
      </ToolBar>
      <Main>
        <Dock>
          <DockTitle>
            <DockName>任务</DockName>
            <DockIcons>
              <Icon w={7} h={7}><path d="M.5.500h6v6h-6zM.5 3.500h6" stroke="#777" /></Icon>
              <Icon w={7} h={7}><path d="M2.500.500h4v4h-4zM.5 2.500h4v4h-4z" stroke="#777" /></Icon>
            </DockIcons>
          </DockTitle>
          <DockBody>
            <TaskList>
              <CloseButton>Close</CloseButton>
              <TaskBox $h={108}>
                <TaskHead><SketchMark /><span>求解器信息</span><Collapse /></TaskHead>
                <TaskRow $mt={17}>
                  <StatusText>空草图</StatusText>
                  <ButtonGroup $h={30}>
                    <Segment $w={29}><Sync fill="#4b7fbf" stroke="#204a87" size={23} /></Segment>
                    <Segment $w={30} $split><Triangle /></Segment>
                  </ButtonGroup>
                </TaskRow>
              </TaskBox>
              <TaskBox $h={410}>
                <TaskHead><ConstraintMark /><span>约束</span><Collapse /></TaskHead>
                <TaskRow $mt={19}>
                  <CheckBox><Icon w={13} h={13}><path d="M2 6l3.500 5L11 1.500" stroke="#000" strokeWidth="2.600" strokeLinejoin="miter" /></Icon></CheckBox>
                  <ButtonGroup $h={34} $ml={23}>
                    <Segment $w={71}><SegmentLabel>过滤器</SegmentLabel></Segment>
                    <Segment $w={29} $split><Triangle /></Segment>
                  </ButtonGroup>
                  <ButtonGroup $h={34} $ml={10}><Segment $w={30}><Eye /></Segment></ButtonGroup>
                  <ButtonGroup $h={34} $ml={9}>
                    <Segment $w={29}><Wrench /></Segment>
                    <Segment $w={30} $split><Triangle /></Segment>
                  </ButtonGroup>
                </TaskRow>
                <ConstraintList />
              </TaskBox>
              <TaskBox $h={108}><TaskHead /></TaskBox>
            </TaskList>
            <ScrollBar>
              <ScrollUp><svg width="5" height="3"><path d="M0 3h5L2.500 0z" fill="#888" /></svg></ScrollUp>
              <ScrollThumb />
            </ScrollBar>
          </DockBody>
        </Dock>
        <Viewport><Sketch /></Viewport>
      </Main>
    </Window>
  );
}
